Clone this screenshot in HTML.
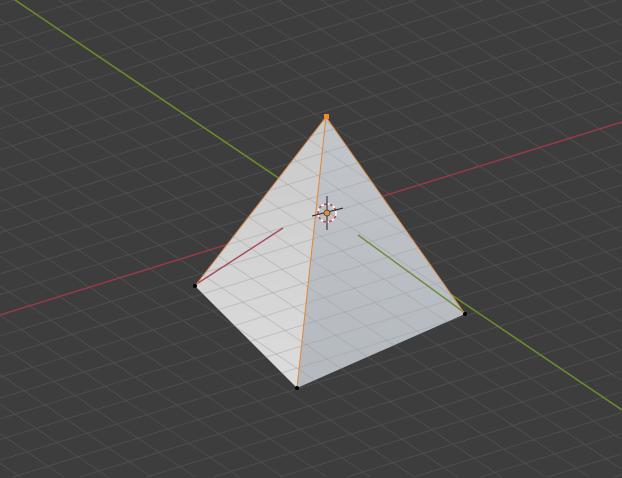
<!DOCTYPE html>
<html><head><meta charset="utf-8"><style>
html,body{margin:0;padding:0;background:#3d3d3d;width:622px;height:478px;overflow:hidden}
svg{display:block;position:absolute;left:0;top:0;overflow:hidden}
</style></head><body>
<svg id="s" width="622" height="478" viewBox="0 0 622 478" xmlns="http://www.w3.org/2000/svg" overflow="hidden">
<rect width="622" height="478" fill="#3d3d3d"/>
<g id="grid" stroke="#4d4d4d" stroke-width="1"></g>
<line x1="15" y1="0" x2="622" y2="410" stroke="#6a8a2e" stroke-width="1.6"/>
<line x1="0" y1="315" x2="622" y2="122" stroke="#9a3a48" stroke-width="1.4"/>
<defs>
<linearGradient id="lf" x1="0" y1="0" x2="0" y2="1"><stop offset="0" stop-color="#c9c9c9"/><stop offset="1" stop-color="#dcdcdc"/></linearGradient>
<linearGradient id="rf" x1="0" y1="0" x2="0" y2="1"><stop offset="0" stop-color="#c2c6cb"/><stop offset="1" stop-color="#b4b9bf"/></linearGradient>
<clipPath id="pc"><polygon points="195,286 326,117 465,314 297,388"/></clipPath>
</defs>
<polygon points="195,286 326,117 297,388" fill="url(#lf)"/>
<polygon points="326,117 465,314 297,388" fill="url(#rf)"/>
<g id="grid2" clip-path="url(#pc)" stroke="#9a9a9a" stroke-opacity="0.4" stroke-width="1"></g>
<line x1="195" y1="285" x2="283" y2="228" stroke="#a84a58" stroke-width="1.4" clip-path="url(#pc)"/>
<line x1="358" y1="235" x2="465" y2="313" stroke="#6f8a3a" stroke-width="1.4"/>
<polyline points="195,286 326,117 465,314" fill="none" stroke="#d8894a" stroke-width="1"/>
<line x1="326" y1="117" x2="297" y2="388" stroke="#e0863a" stroke-width="1"/>
<circle cx="195" cy="286" r="2" fill="#000"/>
<circle cx="297" cy="388" r="2" fill="#000"/>
<circle cx="465" cy="314" r="2" fill="#000"/>
<rect x="324" y="114" width="5" height="5" fill="#f08a20"/>
<g>
<circle cx="327" cy="213" r="9" fill="none" stroke="#ffffff" stroke-width="1.5" stroke-dasharray="3 3"/>
<circle cx="327" cy="213" r="9" fill="none" stroke="#d04040" stroke-width="1.5" stroke-dasharray="3 3" stroke-dashoffset="3"/>
<line x1="327" y1="196" x2="327" y2="230" stroke="#223" stroke-width="1"/>
<line x1="312" y1="216" x2="343" y2="208" stroke="#223" stroke-width="1"/>
<circle cx="327" cy="213" r="3" fill="#e09030" stroke="#333" stroke-width="0.7"/>
</g>
</svg>
<script>
(function(){
var ns="http://www.w3.org/2000/svg";
var O=[330,213],u=[30,-9.3],v=[21,14.2];
function clip(a,b){
 var x0=a[0],y0=a[1],dx=b[0]-x0,dy=b[1]-y0,t0=0,t1=1;
 var p=[-dx,dx,-dy,dy],q=[x0,621-x0,y0,477-y0];
 for(var i=0;i<4;i++){
  if(p[i]==0){if(q[i]<0)return null;}
  else{var r=q[i]/p[i];if(p[i]<0){if(r>t1)return null;if(r>t0)t0=r;}else{if(r<t0)return null;if(r<t1)t1=r;}}
 }
 return [[x0+t0*dx,y0+t0*dy],[x0+t1*dx,y0+t1*dy]];
}
function add(g,a,b){var c=clip(a,b);if(!c)return;var l=document.createElementNS(ns,"line");l.setAttribute("x1",c[0][0]);l.setAttribute("y1",c[0][1]);l.setAttribute("x2",c[1][0]);l.setAttribute("y2",c[1][1]);g.appendChild(l);}
["grid","grid2"].forEach(function(id){
var g=document.getElementById(id);
for(var k=-40;k<=40;k++){
 if(k==0&&id=="grid")continue;
 var p=[O[0]+k*v[0],O[1]+k*v[1]];
 add(g,[p[0]-40*u[0],p[1]-40*u[1]],[p[0]+40*u[0],p[1]+40*u[1]]);
 var q=[O[0]+k*u[0],O[1]+k*u[1]];
 add(g,[q[0]-40*v[0],q[1]-40*v[1]],[q[0]+40*v[0],q[1]+40*v[1]]);
}});
})();
</script>
</body></html>
